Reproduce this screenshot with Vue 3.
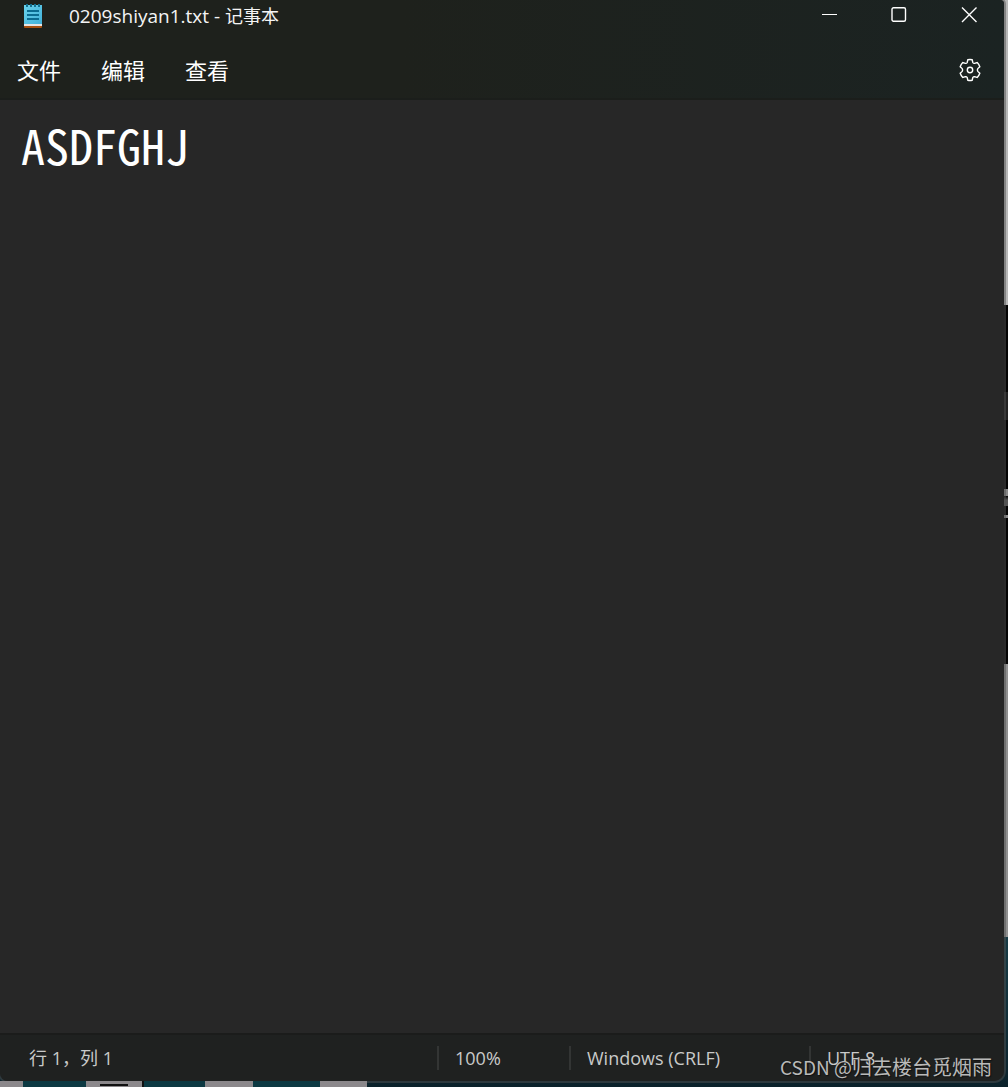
<script setup>
import { ref } from 'vue'

const menus = ['文件', '编辑', '查看']
const text = ref('ASDFGHJ')
const tiles = [
  { w: 23, c: 'light' }, { w: 63, c: 'teal' }, { w: 58, c: 'light marked' }, { w: 61, c: 'teal' },
  { w: 48, c: 'light' }, { w: 67, c: 'teal' }, { w: 47, c: 'light' },
]
</script>

<template>
  <div class="desktop">
    <main class="window">
      <header class="top">
        <div class="titlebar">
          <svg class="app-icon" width="18" height="24" viewBox="0 0 18 24">
            <defs>
              <linearGradient id="pad" x1="0" y1="0" x2="1" y2="1">
                <stop offset="0" stop-color="#6bd3ec" />
                <stop offset="1" stop-color="#41b0d8" />
              </linearGradient>
            </defs>
            <rect y="20" width="18" height="4" rx="1" fill="#a9500f" />
            <rect y="19" width="18" height="3" fill="#e6e4e4" />
            <path d="M0 1h18v19H0z" fill="url(#pad)" />
            <path d="M3 0v3M7 0v3M11 0v3M15 0v3" stroke="#14718f" stroke-width="2" />
            <path d="M3 7h12M3 11h12M3 15h12" stroke="#0b6c91" stroke-width="2" />
          </svg>
          <h1 class="title"><span class="latin">0209shiyan1.txt - </span>记事本</h1>
          <div class="controls">
            <button type="button" aria-label="最小化">
              <svg width="16" height="16" viewBox="0 0 16 16"><path d="M1 7.5h15" stroke-width="1" /></svg>
            </button>
            <button type="button" aria-label="最大化">
              <svg width="16" height="16" viewBox="0 0 16 16"><rect x="1" y="0.7" width="13.5" height="13.5" rx="1.5" /></svg>
            </button>
            <button type="button" aria-label="关闭">
              <svg width="16" height="16" viewBox="0 0 16 16"><path d="M1 .5l14.5 14.5M15.5 .5L1 15" /></svg>
            </button>
          </div>
        </div>
        <nav class="menubar">
          <button v-for="m in menus" :key="m" type="button" class="menu">{{ m }}</button>
          <button type="button" class="settings" aria-label="设置">
            <svg width="24" height="24" viewBox="0 0 24 24">
              <path d="M9.8 1.8Q12 1.2 14.2 1.8L14.8 4.5Q15.3 5.5 16.6 5.4L19.2 4.5Q21 6.3 21.8 8.7L19.8 10.6Q18.9 12 19.8 13.4L21.8 15.3Q21 17.7 19.2 19.5L16.6 18.6Q15.3 18.5 14.8 19.5L14.2 22.2Q12 22.8 9.8 22.2L9.2 19.5Q8.7 18.5 7.4 18.6L4.8 19.5Q3 17.7 2.2 15.3L4.2 13.4Q5.1 12 4.2 10.6L2.2 8.7Q3 6.3 4.8 4.5L7.4 5.4Q8.7 5.5 9.2 4.5Z" />
              <circle cx="12" cy="12" r="2.7" />
            </svg>
          </button>
        </nav>
      </header>
      <textarea v-model="text" class="editor" aria-label="文本编辑器" spellcheck="false"></textarea>
      <footer class="status">
        <span class="cell position">行 1，列 1</span>
        <span class="cell zoom">100%</span>
        <span class="cell ending">Windows (CRLF)</span>
        <span class="cell encoding">UTF-8</span>
      </footer>
    </main>
    <div class="tiles">
      <i v-for="(t, i) in tiles" :key="i" :class="t.c" :style="{ width: t.w + 'px' }"></i>
    </div>
    <span class="watermark"><span class="site">CSDN @</span>归去楼台觅烟雨</span>
  </div>
</template>

<style>
body {
  margin: 0;
}
</style>

<style scoped>
.desktop {
  position: relative;
  box-sizing: border-box;
  min-height: 100vh;
  display: flex;
  flex-direction: column;
  overflow: hidden;
  font-family: "Open Sans", "Noto Sans CJK SC", sans-serif;
  background: linear-gradient(#b8b8b8 305px, #050505 305px, #050505 392px, #222 392px, #222 420px, #050505 420px, #050505 489px, #888 489px, #888 496px, #050505 496px, #555 500px, #555 506px, #050505 506px, #050505 515px, #888 515px, #888 518px, #050505 518px, #050505 664px, #909090 664px, #909090 937px, #173b45 937px, #0b222b);
}
.window {
  flex: 1;
  display: flex;
  flex-direction: column;
  margin-right: 4px;
  border-radius: 0 4px 10px 8px;
  overflow: hidden;
  background: #272727;
  box-shadow: 0 0 0 2px rgba(80, 80, 80, 0.5);
}
.top {
  border-bottom: 2px solid #1b1e1b;
  background: linear-gradient(90deg, #1e211c 40%, #1b2322);
}
.titlebar {
  display: flex;
  align-items: flex-start;
  height: 42px;
  padding-left: 24px;
}
.app-icon {
  margin-top: 4px;
}
.title {
  flex: 1;
  margin: 4px 0 0 27px;
  font: 400 18px/24px "Open Sans", "Noto Sans CJK SC", sans-serif;
  color: #f4f4f4;
  white-space: nowrap;
}
.latin {
  font-size: 19px;
}
button {
  padding: 0;
  border: 0;
  background: none;
  color: #fff;
  font: inherit;
}
button svg {
  display: block;
  margin: auto;
  fill: none;
  stroke: #fff;
  stroke-width: 1.4;
}
.controls {
  display: flex;
}
.controls button {
  width: 70px;
  height: 30px;
}
.menubar {
  display: flex;
  align-items: center;
  gap: 40px;
  height: 56px;
  padding: 0 22px 0 17px;
}
.menu {
  padding-bottom: 2px;
  font: 22px/32px "Noto Sans CJK SC", sans-serif;
}
.settings {
  margin-left: auto;
}
.editor {
  flex: 1;
  padding: 12px 21px;
  border: 0;
  outline: 0;
  resize: none;
  background: #272727;
  color: #fff;
  font: 48px/64px "Noto Sans Mono CJK SC", "Noto Sans CJK SC", monospace;
  font-feature-settings: "hwid";
}
.status {
  display: flex;
  align-items: center;
  height: 46px;
  border-top: 2px solid #1b1c1b;
  background: #1f2120;
  color: #c9cac9;
  font-size: 18px;
  line-height: 24px;
  white-space: nowrap;
}
.cell {
  box-sizing: border-box;
  border-left: 2px solid #333534;
  padding-left: 16px;
}
.position {
  flex: 1;
  border: 0;
  padding-left: 29px;
}
.zoom {
  width: 132px;
}
.ending {
  width: 240px;
}
.encoding {
  width: 195px;
}
.tiles {
  display: flex;
  height: 6px;
}
.light {
  background: #8b888b;
}
.teal {
  background: #0c3942;
}
.marked {
  box-sizing: border-box;
  border-right: 2px solid #111;
  background: linear-gradient(#111, #111) 14px 3px / 28px 2px no-repeat #8b888b;
}
.watermark {
  position: absolute;
  right: 16px;
  bottom: 6px;
  font: 20px/28px "Noto Sans CJK SC", sans-serif;
  color: #b9bab9;
  text-shadow: 1px 1px 1px #111;
  white-space: nowrap;
}
.site {
  font-size: 19px;
}
</style>
